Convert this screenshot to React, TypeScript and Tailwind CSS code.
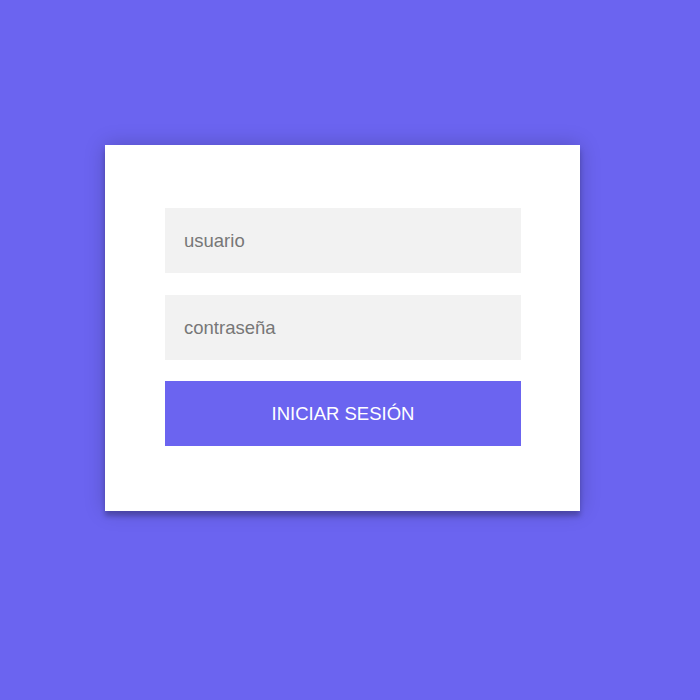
export default function App() {
  return (
    <div className="min-h-[700px] w-full bg-[#6b64f0] pt-[145px] pl-[105px] font-['Liberation_Sans',Arial,sans-serif]">
      <form
        className="w-[475px] bg-white pt-[63px] pb-[65px] px-[60px] shadow-[0_0_20px_0_rgba(0,0,0,0.2),0_5px_5px_0_rgba(0,0,0,0.24)]"
        onSubmit={(e) => e.preventDefault()}
      >
        <input
          type="text"
          placeholder="usuario"
          className="block w-[356px] h-[65px] bg-[#f2f2f2] px-[19px] text-[18.5px] text-[#555] placeholder:text-[#777] outline-none"
        />
        <input
          type="password"
          placeholder="contraseña"
          className="block mt-[22px] w-[356px] h-[65px] bg-[#f2f2f2] px-[19px] text-[18.5px] text-[#555] placeholder:text-[#777] outline-none"
        />
        <button
          type="submit"
          className="block mt-[21px] w-[356px] h-[65px] bg-[#6b64f0] text-white text-[18.5px] uppercase"
        >
          Iniciar sesión
        </button>
      </form>
    </div>
  );
}
